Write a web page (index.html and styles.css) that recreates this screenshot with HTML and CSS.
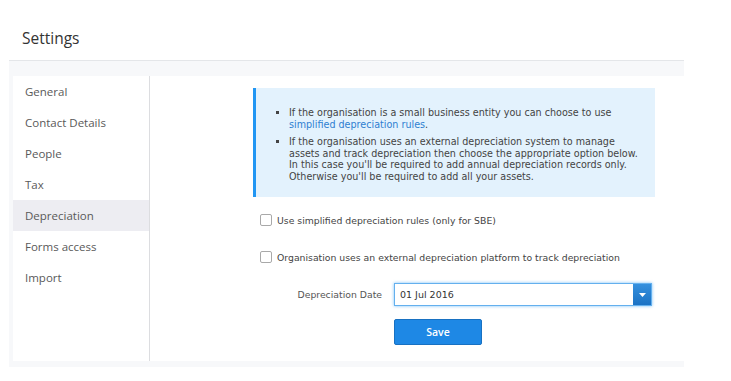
FILE: index.html
```html
<!DOCTYPE html>
<html lang="en">
<head>
    <meta charset="UTF-8">
    <meta name="viewport" content="width=device-width, initial-scale=1.0">
    <title>Settings - Depreciation</title>
    <link rel="stylesheet" href="styles.css">
</head>
<body>
<h1 class="page-title">Settings</h1>
<div class="settings">
    <div class="panel">
        <ul class="sidebar">
            <li class="nav-item">General</li>
            <li class="nav-item">Contact Details</li>
            <li class="nav-item">People</li>
            <li class="nav-item">Tax</li>
            <li class="nav-item active">Depreciation</li>
            <li class="nav-item">Forms access</li>
            <li class="nav-item">Import</li>
        </ul>
        <div class="content">
            <div class="info">
                <ul>
                    <li>If the organisation is a small business entity you can choose to use <a href="#">simplified depreciation rules</a>.</li>
                    <li>If the organisation uses an external depreciation system to manage assets and track depreciation then choose the appropriate option below. In this case you'll be required to add annual depreciation records only. Otherwise you'll be required to add all your assets.</li>
                </ul>
            </div>
            <label class="check-row"><input type="checkbox"> Use simplified depreciation rules (only for SBE)</label>
            <label class="check-row second"><input type="checkbox"> Organisation uses an external depreciation platform to track depreciation</label>
            <div class="field-row">
                <span class="field-label">Depreciation Date</span>
                <div class="select">
                    <span class="select-value">01 Jul 2016</span>
                    <span class="select-btn"><svg width="7" height="4" viewBox="0 0 7 4"><path d="M0 0h7L3.5 4z" fill="#fff"/></svg></span>
                </div>
            </div>
            <div class="actions">
                <button class="btn-save">Save</button>
            </div>
        </div>
    </div>
</div>
</body>
</html>
```

FILE: styles.css
```css
body { margin: 0; background: #fff; font-family: 'Open Sans', sans-serif; color: #333; }
.page-title { margin: 0 0 12px; padding: 28px 0 0 22px; font-size: 15.5px; line-height: 20px; font-weight: 400; color: #333; }
.settings { margin: 0 47px 0 9px; background: #f7f8fa; border-top: 1px solid #e4e6e9; padding: 15px 0 6px 4px; }
.panel { display: flex; background: #fff; height: 285px; }
.sidebar { list-style: none; margin: 0; padding: 0; width: 136px; border-right: 1px solid #dcdde0; }
.nav-item { height: 31px; line-height: 31px; padding-left: 12px; font-size: 11.5px; color: #595959; }
.nav-item.active { background: #ededf2; }
.content { flex: 1; padding: 12px 0 0 103px; font-family: 'DejaVu Sans', Verdana, sans-serif; font-size: 9.3px; color: #444; }
.info { width: 402px; background: #e3f2fd; border-left: 3px solid #2196f3; padding: 19px 0 15px; box-sizing: border-box; height: 109px; font-size: 9.6px; }
.info ul { margin: 0; padding: 0 16px 0 33px; list-style-type: square; }
.info li { line-height: 11.6px; }
.info li + li { margin-top: 6px; }
.info a { color: #2f7fd1; text-decoration: none; }
.check-row { display: flex; align-items: center; margin: 16px 0 0 7px; height: 14px; }
.check-row.second { margin-top: 23px; }
.check-row input { appearance: none; -webkit-appearance: none; width: 12px; height: 12px; margin: 0 5px 0 0; border: 1px solid #a9a9a9; border-radius: 2px; background: #fff; }
.field-row { display: flex; align-items: center; margin-top: 19px; }
.field-label { width: 129px; text-align: right; color: #555; font-size: 9.3px; }
.select { display: flex; width: 258px; height: 23px; margin-left: 12px; box-sizing: border-box; border: 1px solid #64b0ee; box-shadow: 0 0 3px rgba(33, 150, 243, 0.6); }
.select-value { flex: 1; line-height: 21px; padding-left: 5px; font-size: 9.5px; color: #333; }
.select-btn { width: 18px; display: flex; align-items: center; justify-content: center; background: linear-gradient(#3590de, #1b72c4); }
.actions { margin: 13px 0 0 141px; }
.btn-save { width: 88px; height: 26px; background: #1e88e5; border: 1px solid #1871c2; border-radius: 2px; color: #fff; font-family: 'Open Sans', sans-serif; font-size: 10.5px; font-weight: 600; padding: 0; }
```
